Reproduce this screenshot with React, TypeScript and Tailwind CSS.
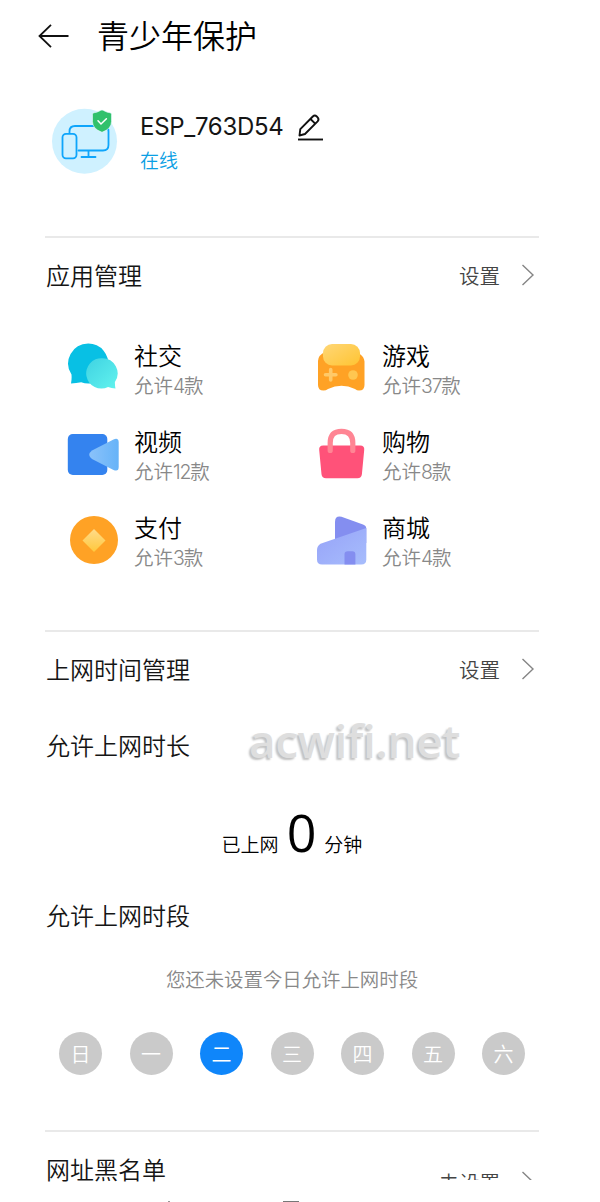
import React from 'react';

interface AppCategory {
  name: string;
  count: number;
  icon: React.ReactNode;
}

interface SectionHeaderProps {
  title: string;
  action: string;
}

const ChatIcon = () => (
  <svg viewBox="-0.7 0 54 54" className="w-[54px] h-[54px]">
    <defs>
      <linearGradient id="chat" x1="0" y1="0" x2="1" y2="1">
        <stop offset="0" stopColor="#3fd2e2" />
        <stop offset="1" stopColor="#62f3ee" />
      </linearGradient>
    </defs>
    <path d="M22.500 2.500a20 20 0 1 1 -7 38.700q-5 1-10.200 1.300q.9-4.500.5-9A20 20 0 0 1 22.500 2.500z" fill="#08c0e4" />
    <path d="M36.600 17.200a15.200 15.200 0 0 1 12.600 23.800q-.1 3 .6 6.500q-4-.4-7.400-1.500A15.200 15.200 0 1 1 36.600 17.200z" fill="url(#chat)" />
  </svg>
);

const GameIcon = () => (
  <svg viewBox="-2 0 54 54" className="w-[54px] h-[54px]">
    <defs>
      <linearGradient id="game" x1="0" y1="0" x2="1" y2="1">
        <stop offset="0" stopColor="#ffd777" />
        <stop offset="1" stopColor="#ffc432" />
      </linearGradient>
    </defs>
    <path d="M10 11h30q2.500.5 5.500 2.500q3.500 2.500 4 7V44q0 5.500-5.500 5.500q-2 0-4-1.500q-13.500-6.500-27 0q-2 1.500-4.500 1.500q-5.500 0-5.500-5.500V20q.2-6 7-9z" fill="#ffa225" />
    <rect x="8" y="3" width="37" height="21.500" rx="9" fill="url(#game)" />
    <path d="M15.700 28.500v10.400M10.500 33.700h10.400" stroke="#ffc968" strokeWidth="3.600" strokeLinecap="round" />
    <circle cx="38" cy="34" r="4.800" fill="#ffc650" />
  </svg>
);

const VideoIcon = () => (
  <svg viewBox="0 0 54 54" className="w-[54px] h-[54px]">
    <defs>
      <linearGradient id="video" x1="0" y1="0" x2="1" y2="0">
        <stop offset="0" stopColor="#8bc2fa" />
        <stop offset="1" stopColor="#66b3f8" />
      </linearGradient>
    </defs>
    <rect x="2.800" y="7" width="39.500" height="41" rx="5" fill="#3483ef" />
    <path d="M27 23.600l21.500-11.200q5.200-2 5.200 3v24.500q0 5-5.200 3L27 32q-5.500-4.200 0-8.400z" fill="url(#video)" />
  </svg>
);

const BagIcon = () => (
  <svg viewBox="-1.7 0 54 54" className="w-[54px] h-[54px]">
    <path d="M8.500 18.500h37q4.500 0 4 4.500l-2.300 24.200q-.5 4-4.500 4H11.300q-4 0-4.500-4L4.500 23q-.5-4.500 4-4.500z" fill="#ff5279" />
    <path d="M15.500 23.500V16q0-11.700 11.300-11.700T38.100 16v7.500" fill="none" stroke="#ff8594" strokeWidth="5.200" strokeLinecap="round" />
  </svg>
);

const PayIcon = () => (
  <svg viewBox="0 0 54 54" className="w-[54px] h-[54px]">
    <defs>
      <linearGradient id="pay" x1="0" y1="0" x2="0" y2="1">
        <stop offset="0" stopColor="#ffdb8a" />
        <stop offset="1" stopColor="#ffc83c" />
      </linearGradient>
    </defs>
    <circle cx="29" cy="27" r="24" fill="#ffa225" />
    <path d="M29 16l11.500 11.500L29 39L17.500 27.500z" fill="url(#pay)" />
  </svg>
);

const MallIcon = () => (
  <svg viewBox="-2 0 54 54" className="w-[54px] h-[54px]">
    <defs>
      <linearGradient id="mall" x1="0" y1="0" x2="1" y2="1">
        <stop offset="0" stopColor="#96a2f8" />
        <stop offset="1" stopColor="#a7bdfc" />
      </linearGradient>
    </defs>
    <path d="M20 9q0-6.500 6.500-5.200L48 11.500q3.300 1.200 3.300 4V30H20z" fill="#848ef0" />
    <path d="M51.300 15v31.500q0 5-5 5H7q-5 0-5-5V37q0-4 3.500-6.200z" fill="url(#mall)" />
    <path d="M29.500 51.500V41.500q0-3.200 3.200-3.200h4.500q3.200 0 3.200 3.200v10z" fill="#848ef0" />
  </svg>
);

const DeviceIcon = () => (
  <svg viewBox="0 0 70 70" className="w-[70px] h-[70px]" fill="none">
    <circle cx="34.500" cy="36.300" r="32.500" fill="#cff1ff" />
    <g stroke="#0ea5fb" strokeWidth="1.800" strokeLinecap="round">
      <path d="M19.500 28v-1.500q0-5.500 5.500-5.500h28q5.500 0 5.500 5.500v13.500q0 5.500-5.500 5.500H28.500" />
      <rect x="12.500" y="28.800" width="14" height="24.500" rx="3.500" />
      <path d="M38.500 46v5.500M31.500 52h14" />
    </g>
    <path d="M52 5q1 0 2.500 1q3 1.700 5.500 1.700q1.500 0 1.500 1.700v7.200q0 7.300-9.500 10.700q-9.500-3.400-9.500-10.700v-7.200q0-1.700 1.500-1.700q2.500 0 5.500-1.700q1.500-1 2.500-1z" fill="#31c16c" stroke="#e9faff" strokeWidth="0.600" />
    <path d="M48 15.800l3 3.200l5.400-5.300" stroke="#fff" strokeWidth="1.500" strokeLinecap="round" />
  </svg>
);

const Chevron = () => (
  <svg viewBox="0 0 14 24" className="w-[14px] h-[24px]" fill="none">
    <path d="M1.500 2l10.500 10l-10.500 10" stroke="#858585" strokeWidth="1.400" />
  </svg>
);

const categories: AppCategory[] = [
  { name: '社交', count: 4, icon: <ChatIcon /> },
  { name: '游戏', count: 37, icon: <GameIcon /> },
  { name: '视频', count: 12, icon: <VideoIcon /> },
  { name: '购物', count: 8, icon: <BagIcon /> },
  { name: '支付', count: 3, icon: <PayIcon /> },
  { name: '商城', count: 4, icon: <MallIcon /> },
];

const days = ['日', '一', '二', '三', '四', '五', '六'];

const SectionHeader: React.FC<SectionHeaderProps> = ({ title, action }) => (
  <div className="flex h-[74px] items-center justify-between pl-px pr-1">
    <h2 className="text-2xl text-[#151515]">{title}</h2>
    <button className="flex items-center gap-[21px] text-[20.5px] text-[#444]">
      {action}
      <Chevron />
    </button>
  </div>
);

const App: React.FC = () => {
  const today = 2;

  return (
    <div className="flex h-[1202px] w-[600px] flex-col overflow-hidden bg-white font-['Noto_Sans_CJK_SC',sans-serif] font-[350] text-black">
      <header className="flex h-[72px] items-center gap-[28px] pl-[38px]">
        <svg viewBox="0 0 31 26" className="h-[26px] w-[31px]" fill="none">
          <path d="M30.500 13H2M13 1.800L1.500 13L13 24.200" stroke="#111" strokeWidth="1.800" />
        </svg>
        <h1 className="pb-[5px] text-[32px] leading-none">青少年保护</h1>
      </header>

      <section className="flex h-[164px] pl-[50px] pt-[33px]">
        <DeviceIcon />
        <div className="pl-5 pt-[5px]">
          <div className="flex h-[34px] items-center">
            <span className="w-[156px] font-['Inter'] text-[24px] font-normal tracking-[-0.3px] whitespace-nowrap text-[#151515]">
              ESP_763D54
            </span>
            <svg viewBox="0 0 28 28" className="h-[28px] w-[28px]" fill="none" stroke="#111" strokeWidth="1.900" strokeLinejoin="round">
              <path d="M3.500 22.500l.8-6.300L16.800 3.500q2-1.800 4 0l.8.800q1.800 2 0 4L9 21z" />
              <path d="M14.500 6l4.700 4.700" />
              <path d="M2 26.500h25" />
            </svg>
          </div>
          <p className="text-[19px] leading-[32px] text-[#0ba0e4]">在线</p>
        </div>
      </section>

      <div className="ml-[45px] w-[494px]">
        <section className="h-[394px] border-t-2 border-[#e9e9e9]">
          <SectionHeader title="应用管理" action="设置" />
          <div className="grid grid-cols-[248px_1fr] pl-5 pt-[13px]">
            {categories.map((item) => (
              <div key={item.name} className="flex h-[86px] items-center gap-[15px]">
                {item.icon}
                <div className="pt-1">
                  <h3 className="text-2xl leading-[30px]">{item.name}</h3>
                  <p className="text-[19.500px] leading-[29px] text-[#888]">
                    允许
                    <span className="font-['Inter'] font-light tracking-[-1.2px]">{item.count}</span>
                    款
                  </p>
                </div>
              </div>
            ))}
          </div>
        </section>

        <section className="h-[500px] border-t-2 border-[#e9e9e9]">
          <SectionHeader title="上网时间管理" action="设置" />
          <div className="relative flex h-[78px] items-center pl-px">
            <h3 className="text-2xl text-[#151515]">允许上网时长</h3>
            <span className="absolute left-[204px] top-[4px] font-['Open_Sans'] text-[46px] leading-[60px] font-semibold tracking-[-0.5px] text-[#dedede] [text-shadow:-2px_2px_2px_#c2c2c2]">
              acwifi.net
            </span>
          </div>
          <div className="flex h-[94px] items-baseline justify-center pt-[16px] text-[19px]">
            <span>已上网</span>
            <span className="mx-[8px] font-['Open_Sans'] text-[52px] leading-[64px] font-normal">0</span>
            <span>分钟</span>
          </div>
          <h3 className="pl-px text-2xl leading-[74px] text-[#151515]">允许上网时段</h3>
          <p className="text-center text-[19.400px] leading-[54px] text-[#888]">您还未设置今日允许上网时段</p>
          <div className="flex justify-between px-[14px] pt-[26px]">
            {days.map((day, index) => (
              <div
                key={day}
                className={`flex h-[43px] w-[43px] items-center justify-center rounded-full text-xl text-white ${
                  index === today ? 'bg-[#0f86fa]' : 'bg-[#cacaca]'
                }`}
              >
                {day}
              </div>
            ))}
          </div>
        </section>

        <section className="flex h-[50px] justify-between border-t-2 border-[#e9e9e9] pl-px pr-1">
          <h2 className="text-2xl leading-[73px] text-[#151515]">网址黑名单</h2>
          <div className="h-[48px] overflow-hidden">
            <button className="mt-[38px] flex h-[24px] items-center gap-[21px] text-[20.5px] text-[#444]">
              未设置
              <Chevron />
            </button>
          </div>
        </section>
      </div>

      <footer className="flex h-[22px] items-end pl-[168px]">
        <span className="h-px w-[2px] bg-[#999]" />
        <span className="ml-[113px] h-px w-[16px] bg-[#777]" />
      </footer>
    </div>
  );
};

export default App;
